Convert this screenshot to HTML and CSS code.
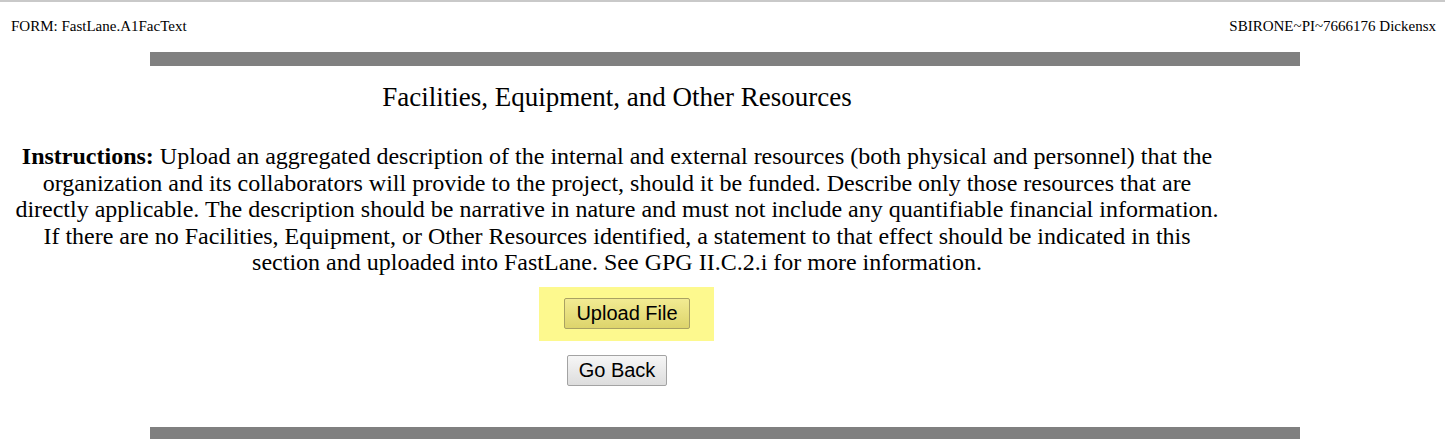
FILE: index.html
```html
<!DOCTYPE html>
<html>
<head>
<meta charset="utf-8">
<link rel="stylesheet" href="styles.css">
</head>
<body>
<div class="page">
  <div class="topline"></div>
  <div class="header">
    <span>FORM: FastLane.A1FacText</span>
    <span>SBIRONE~PI~7666176 Dickensx</span>
  </div>
  <div class="bar bar-top"></div>
  <div class="content">
    <h1 class="title">Facilities, Equipment, and Other Resources</h1>
    <p class="instructions"><b>Instructions:</b> Upload an aggregated description of the internal and external resources (both physical and personnel) that the organization and its collaborators will provide to the project, should it be funded. Describe only those resources that are directly applicable. The description should be narrative in nature and must not include any quantifiable financial information. If there are no Facilities, Equipment, or Other Resources identified, a statement to that effect should be indicated in this section and uploaded into FastLane. See GPG II.C.2.i for more information.</p>
    <div class="highlight">
      <button class="btn btn-upload" type="button">Upload File</button>
    </div>
    <button class="btn btn-back" type="button">Go Back</button>
  </div>
  <div class="bar bar-bottom"></div>
</div>
</body>
</html>
```

FILE: styles.css
```css
html, body {
  margin: 0;
  padding: 0;
  background: #ffffff;
}
.page {
  font-family: "Liberation Serif", "Times New Roman", serif;
  color: #000;
}
.topline {
  height: 2px;
  background: #c9c9c9;
}
.header {
  display: flex;
  justify-content: space-between;
  padding: 16px 9px 0 11px;
  font-size: 15px;
  line-height: 17px;
  height: 33px;
  box-sizing: border-box;
}
.bar {
  height: 14px;
  background: #808080;
  margin: 0 145px 0 150px;
}
.bar-top {
  margin-top: 17px;
}
.content {
  width: 1234px;
  display: flex;
  flex-direction: column;
  align-items: center;
}
.title {
  font-weight: normal;
  font-size: 27px;
  line-height: 30px;
  margin: 16px 0 0 0;
}
.instructions {
  font-size: 24px;
  line-height: 26.5px;
  text-align: center;
  margin: 31px 0 0 0;
  width: 1220px;
}
.highlight {
  background: #fdf98e;
  width: 175px;
  height: 54px;
  margin: 11px 0 0 18px;
  display: flex;
  align-items: center;
  justify-content: center;
}
.btn {
  font-family: Arial, "Liberation Sans", sans-serif;
  font-size: 20px;
  color: #000;
  padding: 0 11px;
  height: 31px;
  border-radius: 2px;
}
.btn-upload {
  background: linear-gradient(#f2eb92, #ddd46c);
  border: 1px solid #a9a163;
  margin-left: 2px;
}
.btn-back {
  background: linear-gradient(#f6f6f6, #dddddd);
  border: 1px solid #a3a3a3;
  margin-top: 14px;
}
.bar-bottom {
  margin-top: 41px;
  height: 14px;
}
```
